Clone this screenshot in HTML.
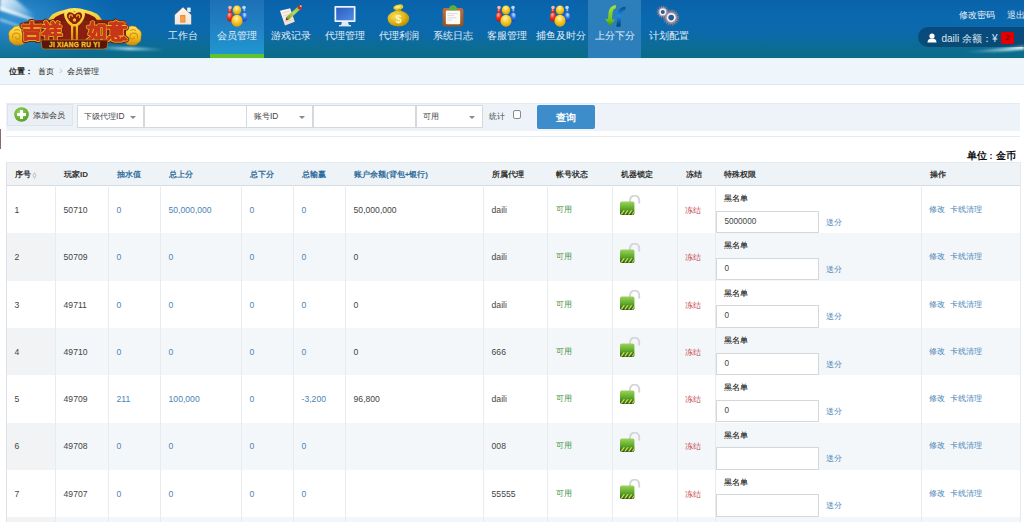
<!DOCTYPE html>
<html><head><meta charset="utf-8">
<style>
*{margin:0;padding:0;box-sizing:border-box}
html,body{width:1024px;height:522px;overflow:hidden;background:#fff;font-family:"Liberation Sans",sans-serif;font-size:8.3px;color:#333;position:relative}
#hd{position:absolute;left:0;top:0;width:1024px;height:57.5px;background:linear-gradient(180deg,#0a63aa 0%,#0a68ae 30%,#0b69ac 55%,#0c6c9a 75%,#0c6b84 100%);overflow:hidden}
#bc{position:absolute;left:0;top:57.5px;width:1024px;height:27px;background:#eef5fb;border-top:1px solid #e6f1f8;border-bottom:1px solid #dfe8ef}
#bc span{position:absolute;top:7px;font-size:8px;color:#222}
.nt{position:absolute;top:30px;width:54px;text-align:center;color:#e3eff9;font-size:9.9px;white-space:nowrap;line-height:12px}
.nav{position:absolute;top:0;height:57.5px;width:54px;color:#e8f2fa;font-size:9.4px}
.nav .t{position:absolute;left:-10px;width:74px;top:30px;text-align:center;white-space:nowrap;line-height:11px}
.nav svg{position:absolute;left:16px;top:4.5px}
#tb{position:absolute;left:6px;top:103px;width:1014px;height:27.5px;background:#edf3f8;border-top:1px solid #e4ebf1}
#tbline{position:absolute;left:6px;top:135.5px;width:1014px;height:1px;background:#e6ebef}
.sel{position:absolute;top:105.2px;height:22.5px;background:#fff;border:1px solid #d4d9de;font-size:8px;color:#444}
.sel .sv{position:absolute;left:6.5px;top:5px;white-space:nowrap;font-size:8.4px}
.sel .ar{position:absolute;right:7px;top:10px;width:0;height:0;border-left:3.5px solid transparent;border-right:3.5px solid transparent;border-top:3.5px solid #888}
#thead{position:absolute;left:6px;top:161.5px;width:1015px;height:24px;background:#eef3f7;border-top:1px solid #e6ebef;border-bottom:1px solid #d4dce3}
#thead .c1{position:absolute;left:0;top:0;width:49.5px;height:100%;background:#f0f2f4}
.hc{position:absolute;top:169px;font-weight:bold;font-size:8px;color:#333;white-space:nowrap;line-height:11px}
.hb{color:#2f6c9c}
.sort{color:#a9b9c9;font-weight:normal;font-size:10px;position:relative;top:0.5px}
.row{position:absolute;left:6px;width:1015px}
.c1bg{position:absolute;left:6px;width:49.5px;background:#f2f3f5}
.vl{position:absolute;top:185px;height:337px;width:1px;background:#e9ecef}
#lb{position:absolute;left:6px;top:161.5px;height:361px;width:1px;background:#dde2e6}
#rb{position:absolute;left:1020px;top:161.5px;height:361px;width:1px;background:#e6eaee}
.cell{position:absolute;white-space:nowrap;line-height:12px;font-size:8.6px}
.t{color:#444}
.v{color:#4a84b5}
.gr{color:#449244;font-size:8px}
.rd{color:#c44448;font-size:8.3px}
.inp{position:absolute;left:716.4px;width:102.4px;height:22.4px;background:#fff;border:1px solid #d3d8dc;font-size:8.2px;color:#444;padding-left:7px;line-height:20.5px}
</style></head><body>
<div id="hd">
<svg style="position:absolute;left:0;top:0" width="1024" height="58" viewBox="0 0 1024 58">
<defs>
<radialGradient id="glowL" cx="0.1" cy="0.3" r="0.9"><stop offset="0" stop-color="#5ab8f0" stop-opacity="0.55"/><stop offset="1" stop-color="#2a90d8" stop-opacity="0"/></radialGradient>
<linearGradient id="beam" x1="0" y1="0" x2="1" y2="0.6"><stop offset="0" stop-color="#fff" stop-opacity="0.95"/><stop offset="0.5" stop-color="#e8f8ff" stop-opacity="0.6"/><stop offset="1" stop-color="#fff" stop-opacity="0"/></linearGradient>
<linearGradient id="streak2" x1="0" y1="0" x2="1" y2="0"><stop offset="0" stop-color="#bff" stop-opacity="0"/><stop offset="0.5" stop-color="#dff" stop-opacity="0.75"/><stop offset="1" stop-color="#bff" stop-opacity="0"/></linearGradient>
<linearGradient id="streak3" x1="0" y1="0" x2="1" y2="0"><stop offset="0" stop-color="#cff" stop-opacity="0"/><stop offset="1" stop-color="#eff" stop-opacity="0.95"/></linearGradient>
<filter id="blur1" x="-20%" y="-50%" width="140%" height="200%"><feGaussianBlur stdDeviation="1.6"/></filter>
<filter id="blur2" x="-20%" y="-50%" width="140%" height="200%"><feGaussianBlur stdDeviation="0.8"/></filter>
</defs>
<rect x="0" y="0" width="120" height="57" fill="url(#glowL)"/>
<path d="M0 -2 L14 -2 L40 20 L34 21 L0 10 Z" fill="url(#beam)" filter="url(#blur1)"/>
<path d="M0 6 L34 19 L33 20.5 L0 10 Z" fill="#fff" opacity="0.75" filter="url(#blur2)"/>
<path d="M0 18 L22 26 L21 27.5 L0 21 Z" fill="#fff" opacity="0.45" filter="url(#blur2)"/>
<path d="M95 46 Q130 47 165 49 L165 50.5 Q130 50.5 95 49 Z" fill="url(#streak2)" filter="url(#blur2)"/>
<path d="M965 51.5 Q1000 49 1024 45 L1024 49.5 Q1000 52.5 965 52.5 Z" fill="url(#streak3)" filter="url(#blur2)"/>
</svg>
<svg style="position:absolute;left:0;top:0" width="150" height="57" viewBox="0 0 150 57">
<defs>
<linearGradient id="gold" x1="0" y1="0" x2="0" y2="1"><stop offset="0" stop-color="#ffe45a"/><stop offset="0.55" stop-color="#f3c020"/><stop offset="1" stop-color="#d08c10"/></linearGradient>
<linearGradient id="redf" x1="0" y1="0" x2="0" y2="1"><stop offset="0" stop-color="#e8502a"/><stop offset="1" stop-color="#c8321a"/></linearGradient>
</defs>
<!-- arch behind -->
<path d="M30 34 Q34 22 48 20 Q52 12 64 10 Q74 6 86 10 Q98 12 102 20 Q116 22 120 34 Z" fill="url(#gold)"/>
<path d="M35 34 Q38 25 51 23 Q55 15 65 13 Q74 10 85 13 Q95 15 99 23 Q112 25 115 34 Z" fill="#7a1a0e"/>
<!-- clouds -->
<g id="cloudL">
<path d="M9 37 Q7.5 31 12 29 Q14 25.5 18.5 26 Q23 26.5 24 30 L25.5 42 Q23 45.5 18 45.2 Q13.5 45.5 11 42.5 Q8.5 40.5 9 37 Z" fill="url(#gold)" stroke="#b87008" stroke-width="0.5"/>
<path d="M12.5 38 Q12 33 16.5 33 Q20.5 33.2 20 37 Q19.5 39.5 17 39 Q15 38.5 16 36.5" fill="none" stroke="#d88a10" stroke-width="1.1"/>
<path d="M14 30.5 Q17 28.5 20 30.5" fill="none" stroke="#d88a10" stroke-width="0.9"/>
</g>
<use href="#cloudL" transform="translate(150 0) scale(-1 1)"/>
<!-- main char band backing -->
<path d="M24 22 Q48 18 64 21 L85 21 Q102 18 126 22 L126 40 L24 40 Z" fill="#8a1e10"/>
<!-- ruyi head -->
<path d="M74.5 12 Q70 8.5 66.5 10 Q63 12 64.5 17 Q66 22 71 26 L71 40 L78 40 L78 26 Q83 22 84.5 17 Q86 12 82.5 10 Q79 8.5 74.5 12 Z" fill="url(#gold)"/>
<path d="M74.5 14.5 Q71 11.5 68.5 12.5 Q66.2 14 67.2 17.5 Q68.5 21 73 24 L76 24 Q80.5 21 81.8 17.5 Q82.8 14 80.5 12.5 Q78 11.5 74.5 14.5 Z" fill="#8a1e10"/>
<path d="M69.5 18 Q68.5 15 71 14.8 Q73 15 72 17" stroke="#f3c020" stroke-width="1.1" fill="none"/>
<path d="M79.5 18 Q80.5 15 78 14.8 Q76 15 77 17" stroke="#f3c020" stroke-width="1.1" fill="none"/>
<circle cx="74.5" cy="20" r="1.7" fill="#f3c020"/>
<rect x="73.2" y="26.5" width="2.6" height="13" fill="#8a1e10"/>
<!-- text -->
<g font-family="Liberation Sans" font-size="19.6" font-weight="bold">
<text x="22" y="37.6" fill="#6a1a0a" stroke="#6a1a0a" stroke-width="4.6" stroke-linejoin="round">吉祥</text>
<text x="86.5" y="37.6" fill="#6a1a0a" stroke="#6a1a0a" stroke-width="4.6" stroke-linejoin="round">如意</text>
<text x="22" y="37.6" fill="#f2c02a" stroke="#f2c02a" stroke-width="2.6" stroke-linejoin="round">吉祥</text>
<text x="86.5" y="37.6" fill="#f2c02a" stroke="#f2c02a" stroke-width="2.6" stroke-linejoin="round">如意</text>
<text x="22" y="37.6" fill="#d23e1c" stroke="#c8361a" stroke-width="1.1">吉祥</text>
<text x="86.5" y="37.6" fill="#d23e1c" stroke="#c8361a" stroke-width="1.1">如意</text>
</g>
<!-- banner -->
<path d="M41 40 L108 40 L107 48 Q104 49.5 100 49 L48 49 Q43 49.5 42 48 Z" fill="#5a1408" stroke="#c89020" stroke-width="0.6"/>
<text x="74.5" y="47.2" text-anchor="middle" font-family="Liberation Sans" font-size="6.5" font-weight="bold" fill="#f0c030" letter-spacing="0.3" stroke="#f0c030" stroke-width="0.3">JI XIANG RU YI</text>
</svg>
<div style="position:absolute;left:210px;top:0;width:54px;height:57.5px;background:linear-gradient(180deg,#1d70b6 0%,#2283c4 50%,#1e9ad2 100%)"></div>
<div style="position:absolute;left:210px;top:53.5px;width:54px;height:4px;background:#62c22c"></div>
<div style="position:absolute;left:588px;top:0;width:53px;height:57.5px;background:#2d7fbc"></div>
<!-- house -->
<svg style="position:absolute;left:174px;top:6px" width="18" height="20" viewBox="0 0 18 20">
<defs><linearGradient id="hs" x1="0" y1="0" x2="0" y2="1"><stop offset="0" stop-color="#fff6ee"/><stop offset="1" stop-color="#f4e4d8"/></linearGradient></defs>
<rect x="13.2" y="1.6" width="3.4" height="4.5" fill="#eef6ff"/>
<path d="M0.8 8.8 L9 1.2 L17.2 8.8 L17.2 18.6 L0.8 18.6 Z" fill="url(#hs)"/>
<path d="M0.6 9 L9 1.2 L17.4 9" fill="none" stroke="#a8705a" stroke-width="0.7" opacity="0.7"/>
<rect x="6.2" y="9" width="5.2" height="7.6" fill="#e98a2c"/>
<rect x="7" y="9.8" width="3.6" height="6" fill="#f4a24a"/>
</svg>
<!-- members -->
<svg style="position:absolute;left:225.5px;top:5px" width="22" height="22" viewBox="0 0 22 22">
<defs>
<radialGradient id="mr" cx="0.4" cy="0.25" r="0.8"><stop offset="0" stop-color="#ffb0a0"/><stop offset="0.5" stop-color="#e8301e"/><stop offset="1" stop-color="#b01008"/></radialGradient>
<radialGradient id="mb" cx="0.6" cy="0.25" r="0.8"><stop offset="0" stop-color="#c0e8ff"/><stop offset="0.5" stop-color="#2a70e0"/><stop offset="1" stop-color="#0c3ab0"/></radialGradient>
<radialGradient id="my" cx="0.45" cy="0.3" r="0.75"><stop offset="0" stop-color="#fff6b0"/><stop offset="0.5" stop-color="#f6c820"/><stop offset="1" stop-color="#d89808"/></radialGradient>
</defs>
<g id="memg">
<circle cx="4" cy="2.6" r="1.8" fill="#f8b4b0"/><circle cx="4" cy="6" r="1.9" fill="url(#mr)"/><ellipse cx="4" cy="12" rx="3.2" ry="4.6" fill="url(#mr)"/>
<circle cx="18" cy="2.6" r="1.8" fill="#b8dcff"/><circle cx="18" cy="6" r="1.9" fill="url(#mb)"/><ellipse cx="18" cy="12" rx="3.2" ry="4.6" fill="url(#mb)"/>
<ellipse cx="11" cy="5" rx="4.2" ry="4.6" fill="url(#my)"/><ellipse cx="11" cy="15.8" rx="5.6" ry="6" fill="url(#my)"/>
</g>
</svg>
<!-- notepad -->
<svg style="position:absolute;left:270px;top:0px" width="40" height="30" viewBox="0 0 40 30">
<defs><linearGradient id="pap" x1="0" y1="0" x2="1" y2="1"><stop offset="0" stop-color="#fffaf6"/><stop offset="1" stop-color="#f0d8c8"/></linearGradient>
<linearGradient id="pen" x1="0" y1="1" x2="1" y2="0"><stop offset="0" stop-color="#6a9a20"/><stop offset="0.5" stop-color="#b8d860"/><stop offset="1" stop-color="#90b840"/></linearGradient></defs>
<path d="M10 10.8 L20.2 8.2 L24.8 21.8 L15 25.4 Z" fill="url(#pap)"/>
<path d="M12.5 13 L19 11.2 M13.5 16 L20 14.2 M15 22 L21.5 20" stroke="#e8b8a8" stroke-width="0.6"/>
<path d="M16.2 17.2 L28.6 6 L31.2 8.6 L18.8 19.8 Z" fill="url(#pen)"/>
<path d="M16.2 17.2 L18.8 19.8 L15.6 20.4 Z" fill="#5a4a2a"/>
<circle cx="30" cy="7.2" r="2.3" fill="#c83020"/>
<circle cx="30.8" cy="6.2" r="0.9" fill="#f8c0b0"/>
</svg>
<!-- monitor -->
<svg style="position:absolute;left:333.5px;top:5px" width="22" height="22" viewBox="0 0 22 22">
<defs><linearGradient id="scr" x1="0" y1="0" x2="1" y2="1"><stop offset="0" stop-color="#2b5cc4"/><stop offset="1" stop-color="#4f8ee0"/></linearGradient></defs>
<rect x="0.5" y="1" width="21" height="16" fill="#eef4fb" rx="0.8"/>
<rect x="2.2" y="2.7" width="17.6" height="12.6" fill="url(#scr)"/>
<path d="M8 17 L14 17 L15 20 L7 20 Z" fill="#e0e8f0"/>
<rect x="5" y="20" width="12" height="1.4" fill="#dfe7ef"/>
</svg>
<!-- money bag -->
<svg style="position:absolute;left:380px;top:0px" width="40" height="30" viewBox="0 0 40 30">
<defs><radialGradient id="bag" cx="0.38" cy="0.35" r="0.75"><stop offset="0" stop-color="#f8e060"/><stop offset="0.6" stop-color="#dcb010"/><stop offset="1" stop-color="#a88200"/></radialGradient></defs>
<ellipse cx="18.3" cy="7.2" rx="5" ry="2.6" transform="rotate(-12 18.3 7.2)" fill="#e8c830"/>
<ellipse cx="17.8" cy="7" rx="3" ry="1.2" transform="rotate(-12 17.8 7)" fill="#f8e878"/>
<path d="M15.5 9 Q18 11 21 9 L21.5 11.5 L15 11.5 Z" fill="#c8a010"/>
<ellipse cx="18.4" cy="18.6" rx="10.8" ry="7.9" fill="url(#bag)"/>
<text x="18.6" y="23.2" text-anchor="middle" font-family="Liberation Sans" font-size="11" font-weight="bold" fill="#fff6c0">$</text>
</svg>
<!-- clipboard -->
<svg style="position:absolute;left:441.5px;top:4.5px" width="22" height="22" viewBox="0 0 22 22">
<defs><linearGradient id="brd" x1="0" y1="0" x2="0" y2="1"><stop offset="0" stop-color="#c07040"/><stop offset="1" stop-color="#985020"/></linearGradient></defs>
<rect x="0.6" y="3" width="20.8" height="18.6" rx="2.4" fill="url(#brd)"/>
<rect x="3.8" y="5.6" width="14.4" height="13.6" rx="1.2" fill="#fdfaf6"/>
<path d="M5.5 8.6 H15.5 M5.5 10.6 H12 M5.5 12.8 H14.5 M5.5 15 H10" stroke="#c8d0da" stroke-width="0.7"/>
<path d="M6.6 5.2 Q7 0.2 11 0.2 Q15 0.2 15.4 5.2 Z" fill="#5cb040"/>
</svg>
<!-- members 2 -->
<svg style="position:absolute;left:495px;top:5px" width="22" height="22" viewBox="0 0 22 22"><use href="#memg"/></svg>
<svg style="position:absolute;left:549px;top:5px" width="22" height="22" viewBox="0 0 22 22"><use href="#memg"/></svg>
<!-- arrows -->
<svg style="position:absolute;left:600px;top:0px" width="30" height="30" viewBox="0 0 30 30">
<defs>
<linearGradient id="ag" x1="0" y1="0" x2="0" y2="1"><stop offset="0" stop-color="#a8e838"/><stop offset="0.7" stop-color="#6cc020"/><stop offset="1" stop-color="#3a8a18"/></linearGradient>
<linearGradient id="ab" x1="0" y1="0" x2="0" y2="1"><stop offset="0" stop-color="#0a4a90"/><stop offset="0.45" stop-color="#1a90e0"/><stop offset="1" stop-color="#083868"/></linearGradient>
</defs>
<path d="M15.8 5 Q10 5.5 8.6 12 L8 19 L5 19 L10.2 26.6 L14.8 19.5 L12 19.5 L12.4 13 Q13 8.5 15.8 8.2 Z" fill="url(#ag)"/>
<path d="M25.5 6.8 Q19 6.6 17.6 13.5 L16.4 26.8 L20.5 26.4 L21.4 15 Q22 10.5 25.5 10 Z" fill="url(#ab)"/>
</svg>
<!-- gears -->
<svg style="position:absolute;left:650px;top:0px" width="34" height="30" viewBox="0 0 34 30">
<g fill="none" stroke="#8a7c8a" stroke-width="2" stroke-dasharray="1.2 1">
<circle cx="12.8" cy="11.9" r="5.2"/>
<circle cx="21.2" cy="17.6" r="7"/>
</g>
<circle cx="12.8" cy="11.9" r="4.6" fill="#a89aa8"/>
<circle cx="21.2" cy="17.6" r="6.3" fill="#9a8c9a"/>
<circle cx="12.8" cy="11.9" r="3.4" fill="#f0f2f6"/><circle cx="12.8" cy="11.9" r="2" fill="#2a5a98"/>
<circle cx="21.2" cy="17.6" r="4.6" fill="#f0f2f6"/><circle cx="21.2" cy="17.6" r="2.8" fill="#2a5a98"/>
</svg>
<div class="nt" style="left:156px">工作台</div>
<div class="nt" style="left:210px">会员管理</div>
<div class="nt" style="left:264px">游戏记录</div>
<div class="nt" style="left:318px">代理管理</div>
<div class="nt" style="left:372px">代理利润</div>
<div class="nt" style="left:426px">系统日志</div>
<div class="nt" style="left:480px">客服管理</div>
<div class="nt" style="left:534px">捕鱼及时分</div>
<div class="nt" style="left:588px">上分下分</div>
<div class="nt" style="left:642px">计划配置</div>
<div style="position:absolute;left:959px;top:9.8px;font-size:8.5px;color:#eaf3fa;white-space:nowrap">修改密码</div>
<div style="position:absolute;left:1006.5px;top:9.8px;font-size:8.5px;color:#eaf3fa;white-space:nowrap">退出</div>
<div style="position:absolute;left:918px;top:26.7px;width:120px;height:20.2px;border-radius:10px;background:rgba(8,50,90,0.55)"></div>
<svg style="position:absolute;left:927px;top:33px" width="10" height="10" viewBox="0 0 10 10"><circle cx="5" cy="3" r="2.6" fill="#fff"/><path d="M0.5 9.5 Q0.5 5.6 5 5.6 Q9.5 5.6 9.5 9.5 Z" fill="#fff"/></svg>
<div style="position:absolute;left:941.5px;top:31.5px;font-size:10px;color:#dde9f3;white-space:nowrap">daili 余额：¥</div>
<div style="position:absolute;left:1001.3px;top:32.2px;width:13px;height:12px;background:#e00000;border-radius:1px;font-size:7px;color:#600;text-align:center;line-height:12px">2</div>

</div>
<div id="bc">
<span style="left:8.8px;font-weight:bold">位置：</span>
<span style="left:38px">首页</span>
<span style="left:59px;top:5px;font-size:11px;color:#c3c9ce">›</span>
<span style="left:66.8px">会员管理</span>
</div>
<div id="tb"></div>
<div style="position:absolute;left:0;top:129px;width:1px;height:20px;background:#8c6870"></div>
<div style="position:absolute;left:6.5px;top:103.6px;width:66px;height:22px;background:#e9eff4;border:1px solid #dde4ea"></div>
<svg style="position:absolute;left:14.3px;top:107.3px" width="15" height="15" viewBox="0 0 15 15"><defs><radialGradient id="gp" cx="0.4" cy="0.35" r="0.7"><stop offset="0" stop-color="#9ad75a"/><stop offset="1" stop-color="#4f9e1e"/></radialGradient></defs><circle cx="7.5" cy="7.5" r="7.3" fill="url(#gp)"/><rect x="6" y="3" width="3" height="9" fill="#fff"/><rect x="3" y="6" width="9" height="3" fill="#fff"/></svg>
<div style="position:absolute;left:32.8px;top:110px;font-size:8px;color:#333;white-space:nowrap">添加会员</div>
<div class="sel" style="left:76.6px;width:67px"><span class="sv">下级代理ID</span><span class="ar"></span></div>
<div class="sel" style="left:143.5px;width:103px"></div>
<div class="sel" style="left:246.4px;width:67px"><span class="sv">账号ID</span><span class="ar"></span></div>
<div class="sel" style="left:313.3px;width:102.3px"></div>
<div class="sel" style="left:415.6px;width:67px"><span class="sv">可用</span><span class="ar"></span></div>
<div style="position:absolute;left:489.3px;top:110.6px;font-size:8px;color:#444">统计</div>
<div style="position:absolute;left:512.5px;top:110.3px;width:8.3px;height:8.3px;border:1px solid #8a8a8a;border-radius:2px;background:#fff"></div>
<div style="position:absolute;left:537.4px;top:104.8px;width:57.2px;height:24.3px;background:#3d8dcb;border-radius:2px;color:#fff;font-weight:bold;font-size:9.5px;text-align:center;line-height:25px">查询</div>
<div id="tbline"></div>
<div style="position:absolute;left:967px;top:149px;font-size:10.2px;font-weight:bold;color:#111;white-space:nowrap">单位</div><div style="position:absolute;left:989.6px;top:150.6px;font-size:9px;font-weight:bold;color:#111">:</div><div style="position:absolute;left:995.6px;top:149px;font-size:10.2px;font-weight:bold;color:#111;white-space:nowrap">金币</div>
<div id="thead"><div class="c1"></div></div>
<div class="hc " style="left:15.0px">序号<svg style='position:absolute;left:17px;top:3px' width='5' height='7' viewBox='0 0 5 7'><path d='M2.5 0 L4.6 3.5 L2.5 7 L0.4 3.5Z' fill='#b4c2d0'/><path d='M2.5 1.6 L3.5 3.5 L2.5 5.4 L1.5 3.5Z' fill='#eef2f6'/></svg></div>
<div class="hc " style="left:64.0px">玩家ID</div>
<div class="hc hb" style="left:117.0px">抽水值</div>
<div class="hc hb" style="left:169.0px">总上分</div>
<div class="hc hb" style="left:250.0px">总下分</div>
<div class="hc hb" style="left:302.0px">总输赢</div>
<div class="hc hb" style="left:354.0px">账户余额(背包+银行)</div>
<div class="hc " style="left:492.0px">所属代理</div>
<div class="hc " style="left:556.0px">帐号状态</div>
<div class="hc " style="left:621.0px">机器锁定</div>
<div class="hc " style="left:686.0px">冻结</div>
<div class="hc " style="left:724.0px">特殊权限</div>
<div class="hc " style="left:930.0px">操作</div>
<div class="row" style="top:186.20px;height:47.76px;background:#fff"></div>
<div class="row" style="top:233.46px;height:47.76px;background:#f4f7fa"></div>
<div class="c1bg" style="top:233.46px;height:47.76px"></div>
<div class="row" style="top:280.72px;height:47.76px;background:#fff"></div>
<div class="row" style="top:327.98px;height:47.76px;background:#f4f7fa"></div>
<div class="c1bg" style="top:327.98px;height:47.76px"></div>
<div class="row" style="top:375.24px;height:47.76px;background:#fff"></div>
<div class="row" style="top:422.50px;height:47.76px;background:#f4f7fa"></div>
<div class="c1bg" style="top:422.50px;height:47.76px"></div>
<div class="row" style="top:469.76px;height:47.76px;background:#fff"></div>
<div class="row" style="top:517.02px;height:10px;background:#f4f7fa"></div><div class="c1bg" style="top:517.02px;height:10px"></div>
<div class="cell t" style="left:14.6px;top:204.13px">1</div>
<div class="cell t" style="left:63.6px;top:204.13px">50710</div>
<div class="cell v" style="left:116.6px;top:204.13px">0</div>
<div class="cell v" style="left:168.6px;top:204.13px">50,000,000</div>
<div class="cell v" style="left:249.6px;top:204.13px">0</div>
<div class="cell v" style="left:301.6px;top:204.13px">0</div>
<div class="cell t" style="left:353.6px;top:204.13px">50,000,000</div>
<div class="cell t" style="left:491.6px;top:204.13px">daili</div>
<div class="cell gr" style="left:555.6px;top:204.13px">可用</div>
<svg width="24" height="22" viewBox="0 0 24 22" style="position:absolute;left:619.0px;top:195.33px"><defs><linearGradient id="lg0" x1="0" y1="0" x2="0" y2="1"><stop offset="0" stop-color="#9ed25a"/><stop offset="0.55" stop-color="#5aa828"/><stop offset="1" stop-color="#2a5a08"/></linearGradient></defs>
<path d="M11 7.5 V5.2 a4.6 4.6 0 0 1 9.2 0 V7.8" fill="none" stroke="#d4d6dc" stroke-width="2" stroke-linecap="round"/>
<rect x="1" y="6.6" width="14.4" height="13.3" rx="1.6" fill="url(#lg0)"/>
<path d="M1.5 19.5 L4.5 15.3 L6 15.3 L3 19.5Z M5.2 19.5 L8.2 15.3 L9.7 15.3 L6.7 19.5Z M8.9 19.5 L11.9 15.3 L13.4 15.3 L10.4 19.5Z M12.6 19.5 L15 16.2 L15 17.6 L14.1 19.5Z" fill="#d8dc6a"/>
</svg>
<div class="cell rd" style="left:685.0px;top:204.13px">冻结</div>
<div class="cell t" style="left:724.2px;top:192.23px;font-size:8.3px;color:#222;font-weight:normal;text-shadow:0.3px 0 0 rgba(0,0,0,0.5)">黑名单</div>
<div class="inp" style="top:210.83px">5000000</div>
<div class="cell v" style="left:826px;top:216.83px;font-size:8.1px">送分</div>
<div class="cell v" style="left:929.4px;top:204.13px;font-size:8.1px">修改<span style="margin-left:5px">卡线清理</span></div>
<div class="cell t" style="left:14.6px;top:251.39px">2</div>
<div class="cell t" style="left:63.6px;top:251.39px">50709</div>
<div class="cell v" style="left:116.6px;top:251.39px">0</div>
<div class="cell v" style="left:168.6px;top:251.39px">0</div>
<div class="cell v" style="left:249.6px;top:251.39px">0</div>
<div class="cell v" style="left:301.6px;top:251.39px">0</div>
<div class="cell t" style="left:353.6px;top:251.39px">0</div>
<div class="cell t" style="left:491.6px;top:251.39px">daili</div>
<div class="cell gr" style="left:555.6px;top:251.39px">可用</div>
<svg width="24" height="22" viewBox="0 0 24 22" style="position:absolute;left:619.0px;top:242.59px"><defs><linearGradient id="lg1" x1="0" y1="0" x2="0" y2="1"><stop offset="0" stop-color="#9ed25a"/><stop offset="0.55" stop-color="#5aa828"/><stop offset="1" stop-color="#2a5a08"/></linearGradient></defs>
<path d="M11 7.5 V5.2 a4.6 4.6 0 0 1 9.2 0 V7.8" fill="none" stroke="#d4d6dc" stroke-width="2" stroke-linecap="round"/>
<rect x="1" y="6.6" width="14.4" height="13.3" rx="1.6" fill="url(#lg1)"/>
<path d="M1.5 19.5 L4.5 15.3 L6 15.3 L3 19.5Z M5.2 19.5 L8.2 15.3 L9.7 15.3 L6.7 19.5Z M8.9 19.5 L11.9 15.3 L13.4 15.3 L10.4 19.5Z M12.6 19.5 L15 16.2 L15 17.6 L14.1 19.5Z" fill="#d8dc6a"/>
</svg>
<div class="cell rd" style="left:685.0px;top:251.39px">冻结</div>
<div class="cell t" style="left:724.2px;top:239.49px;font-size:8.3px;color:#222;font-weight:normal;text-shadow:0.3px 0 0 rgba(0,0,0,0.5)">黑名单</div>
<div class="inp" style="top:258.09px">0</div>
<div class="cell v" style="left:826px;top:264.09px;font-size:8.1px">送分</div>
<div class="cell v" style="left:929.4px;top:251.39px;font-size:8.1px">修改<span style="margin-left:5px">卡线清理</span></div>
<div class="cell t" style="left:14.6px;top:298.65px">3</div>
<div class="cell t" style="left:63.6px;top:298.65px">49711</div>
<div class="cell v" style="left:116.6px;top:298.65px">0</div>
<div class="cell v" style="left:168.6px;top:298.65px">0</div>
<div class="cell v" style="left:249.6px;top:298.65px">0</div>
<div class="cell v" style="left:301.6px;top:298.65px">0</div>
<div class="cell t" style="left:353.6px;top:298.65px">0</div>
<div class="cell t" style="left:491.6px;top:298.65px">daili</div>
<div class="cell gr" style="left:555.6px;top:298.65px">可用</div>
<svg width="24" height="22" viewBox="0 0 24 22" style="position:absolute;left:619.0px;top:289.85px"><defs><linearGradient id="lg2" x1="0" y1="0" x2="0" y2="1"><stop offset="0" stop-color="#9ed25a"/><stop offset="0.55" stop-color="#5aa828"/><stop offset="1" stop-color="#2a5a08"/></linearGradient></defs>
<path d="M11 7.5 V5.2 a4.6 4.6 0 0 1 9.2 0 V7.8" fill="none" stroke="#d4d6dc" stroke-width="2" stroke-linecap="round"/>
<rect x="1" y="6.6" width="14.4" height="13.3" rx="1.6" fill="url(#lg2)"/>
<path d="M1.5 19.5 L4.5 15.3 L6 15.3 L3 19.5Z M5.2 19.5 L8.2 15.3 L9.7 15.3 L6.7 19.5Z M8.9 19.5 L11.9 15.3 L13.4 15.3 L10.4 19.5Z M12.6 19.5 L15 16.2 L15 17.6 L14.1 19.5Z" fill="#d8dc6a"/>
</svg>
<div class="cell rd" style="left:685.0px;top:298.65px">冻结</div>
<div class="cell t" style="left:724.2px;top:286.75px;font-size:8.3px;color:#222;font-weight:normal;text-shadow:0.3px 0 0 rgba(0,0,0,0.5)">黑名单</div>
<div class="inp" style="top:305.35px">0</div>
<div class="cell v" style="left:826px;top:311.35px;font-size:8.1px">送分</div>
<div class="cell v" style="left:929.4px;top:298.65px;font-size:8.1px">修改<span style="margin-left:5px">卡线清理</span></div>
<div class="cell t" style="left:14.6px;top:345.91px">4</div>
<div class="cell t" style="left:63.6px;top:345.91px">49710</div>
<div class="cell v" style="left:116.6px;top:345.91px">0</div>
<div class="cell v" style="left:168.6px;top:345.91px">0</div>
<div class="cell v" style="left:249.6px;top:345.91px">0</div>
<div class="cell v" style="left:301.6px;top:345.91px">0</div>
<div class="cell t" style="left:353.6px;top:345.91px">0</div>
<div class="cell t" style="left:491.6px;top:345.91px">666</div>
<div class="cell gr" style="left:555.6px;top:345.91px">可用</div>
<svg width="24" height="22" viewBox="0 0 24 22" style="position:absolute;left:619.0px;top:337.11px"><defs><linearGradient id="lg3" x1="0" y1="0" x2="0" y2="1"><stop offset="0" stop-color="#9ed25a"/><stop offset="0.55" stop-color="#5aa828"/><stop offset="1" stop-color="#2a5a08"/></linearGradient></defs>
<path d="M11 7.5 V5.2 a4.6 4.6 0 0 1 9.2 0 V7.8" fill="none" stroke="#d4d6dc" stroke-width="2" stroke-linecap="round"/>
<rect x="1" y="6.6" width="14.4" height="13.3" rx="1.6" fill="url(#lg3)"/>
<path d="M1.5 19.5 L4.5 15.3 L6 15.3 L3 19.5Z M5.2 19.5 L8.2 15.3 L9.7 15.3 L6.7 19.5Z M8.9 19.5 L11.9 15.3 L13.4 15.3 L10.4 19.5Z M12.6 19.5 L15 16.2 L15 17.6 L14.1 19.5Z" fill="#d8dc6a"/>
</svg>
<div class="cell rd" style="left:685.0px;top:345.91px">冻结</div>
<div class="cell t" style="left:724.2px;top:334.01px;font-size:8.3px;color:#222;font-weight:normal;text-shadow:0.3px 0 0 rgba(0,0,0,0.5)">黑名单</div>
<div class="inp" style="top:352.61px">0</div>
<div class="cell v" style="left:826px;top:358.61px;font-size:8.1px">送分</div>
<div class="cell v" style="left:929.4px;top:345.91px;font-size:8.1px">修改<span style="margin-left:5px">卡线清理</span></div>
<div class="cell t" style="left:14.6px;top:393.17px">5</div>
<div class="cell t" style="left:63.6px;top:393.17px">49709</div>
<div class="cell v" style="left:116.6px;top:393.17px">211</div>
<div class="cell v" style="left:168.6px;top:393.17px">100,000</div>
<div class="cell v" style="left:249.6px;top:393.17px">0</div>
<div class="cell v" style="left:301.6px;top:393.17px">-3,200</div>
<div class="cell t" style="left:353.6px;top:393.17px">96,800</div>
<div class="cell t" style="left:491.6px;top:393.17px">daili</div>
<div class="cell gr" style="left:555.6px;top:393.17px">可用</div>
<svg width="24" height="22" viewBox="0 0 24 22" style="position:absolute;left:619.0px;top:384.37px"><defs><linearGradient id="lg4" x1="0" y1="0" x2="0" y2="1"><stop offset="0" stop-color="#9ed25a"/><stop offset="0.55" stop-color="#5aa828"/><stop offset="1" stop-color="#2a5a08"/></linearGradient></defs>
<path d="M11 7.5 V5.2 a4.6 4.6 0 0 1 9.2 0 V7.8" fill="none" stroke="#d4d6dc" stroke-width="2" stroke-linecap="round"/>
<rect x="1" y="6.6" width="14.4" height="13.3" rx="1.6" fill="url(#lg4)"/>
<path d="M1.5 19.5 L4.5 15.3 L6 15.3 L3 19.5Z M5.2 19.5 L8.2 15.3 L9.7 15.3 L6.7 19.5Z M8.9 19.5 L11.9 15.3 L13.4 15.3 L10.4 19.5Z M12.6 19.5 L15 16.2 L15 17.6 L14.1 19.5Z" fill="#d8dc6a"/>
</svg>
<div class="cell rd" style="left:685.0px;top:393.17px">冻结</div>
<div class="cell t" style="left:724.2px;top:381.27px;font-size:8.3px;color:#222;font-weight:normal;text-shadow:0.3px 0 0 rgba(0,0,0,0.5)">黑名单</div>
<div class="inp" style="top:399.87px">0</div>
<div class="cell v" style="left:826px;top:405.87px;font-size:8.1px">送分</div>
<div class="cell v" style="left:929.4px;top:393.17px;font-size:8.1px">修改<span style="margin-left:5px">卡线清理</span></div>
<div class="cell t" style="left:14.6px;top:440.43px">6</div>
<div class="cell t" style="left:63.6px;top:440.43px">49708</div>
<div class="cell v" style="left:116.6px;top:440.43px">0</div>
<div class="cell v" style="left:168.6px;top:440.43px">0</div>
<div class="cell v" style="left:249.6px;top:440.43px">0</div>
<div class="cell v" style="left:301.6px;top:440.43px">0</div>
<div class="cell t" style="left:353.6px;top:440.43px"></div>
<div class="cell t" style="left:491.6px;top:440.43px">008</div>
<div class="cell gr" style="left:555.6px;top:440.43px">可用</div>
<svg width="24" height="22" viewBox="0 0 24 22" style="position:absolute;left:619.0px;top:431.63px"><defs><linearGradient id="lg5" x1="0" y1="0" x2="0" y2="1"><stop offset="0" stop-color="#9ed25a"/><stop offset="0.55" stop-color="#5aa828"/><stop offset="1" stop-color="#2a5a08"/></linearGradient></defs>
<path d="M11 7.5 V5.2 a4.6 4.6 0 0 1 9.2 0 V7.8" fill="none" stroke="#d4d6dc" stroke-width="2" stroke-linecap="round"/>
<rect x="1" y="6.6" width="14.4" height="13.3" rx="1.6" fill="url(#lg5)"/>
<path d="M1.5 19.5 L4.5 15.3 L6 15.3 L3 19.5Z M5.2 19.5 L8.2 15.3 L9.7 15.3 L6.7 19.5Z M8.9 19.5 L11.9 15.3 L13.4 15.3 L10.4 19.5Z M12.6 19.5 L15 16.2 L15 17.6 L14.1 19.5Z" fill="#d8dc6a"/>
</svg>
<div class="cell rd" style="left:685.0px;top:440.43px">冻结</div>
<div class="cell t" style="left:724.2px;top:428.53px;font-size:8.3px;color:#222;font-weight:normal;text-shadow:0.3px 0 0 rgba(0,0,0,0.5)">黑名单</div>
<div class="inp" style="top:447.13px"></div>
<div class="cell v" style="left:826px;top:453.13px;font-size:8.1px">送分</div>
<div class="cell v" style="left:929.4px;top:440.43px;font-size:8.1px">修改<span style="margin-left:5px">卡线清理</span></div>
<div class="cell t" style="left:14.6px;top:487.69px">7</div>
<div class="cell t" style="left:63.6px;top:487.69px">49707</div>
<div class="cell v" style="left:116.6px;top:487.69px">0</div>
<div class="cell v" style="left:168.6px;top:487.69px">0</div>
<div class="cell v" style="left:249.6px;top:487.69px">0</div>
<div class="cell v" style="left:301.6px;top:487.69px">0</div>
<div class="cell t" style="left:353.6px;top:487.69px"></div>
<div class="cell t" style="left:491.6px;top:487.69px">55555</div>
<div class="cell gr" style="left:555.6px;top:487.69px">可用</div>
<svg width="24" height="22" viewBox="0 0 24 22" style="position:absolute;left:619.0px;top:478.89px"><defs><linearGradient id="lg6" x1="0" y1="0" x2="0" y2="1"><stop offset="0" stop-color="#9ed25a"/><stop offset="0.55" stop-color="#5aa828"/><stop offset="1" stop-color="#2a5a08"/></linearGradient></defs>
<path d="M11 7.5 V5.2 a4.6 4.6 0 0 1 9.2 0 V7.8" fill="none" stroke="#d4d6dc" stroke-width="2" stroke-linecap="round"/>
<rect x="1" y="6.6" width="14.4" height="13.3" rx="1.6" fill="url(#lg6)"/>
<path d="M1.5 19.5 L4.5 15.3 L6 15.3 L3 19.5Z M5.2 19.5 L8.2 15.3 L9.7 15.3 L6.7 19.5Z M8.9 19.5 L11.9 15.3 L13.4 15.3 L10.4 19.5Z M12.6 19.5 L15 16.2 L15 17.6 L14.1 19.5Z" fill="#d8dc6a"/>
</svg>
<div class="cell rd" style="left:685.0px;top:487.69px">冻结</div>
<div class="cell t" style="left:724.2px;top:475.79px;font-size:8.3px;color:#222;font-weight:normal;text-shadow:0.3px 0 0 rgba(0,0,0,0.5)">黑名单</div>
<div class="inp" style="top:494.39px"></div>
<div class="cell v" style="left:826px;top:500.39px;font-size:8.1px">送分</div>
<div class="cell v" style="left:929.4px;top:487.69px;font-size:8.1px">修改<span style="margin-left:5px">卡线清理</span></div>
<div class="vl" style="left:55.0px"></div>
<div class="vl" style="left:108.0px"></div>
<div class="vl" style="left:160.0px"></div>
<div class="vl" style="left:241.0px"></div>
<div class="vl" style="left:293.0px"></div>
<div class="vl" style="left:345.0px"></div>
<div class="vl" style="left:483.0px"></div>
<div class="vl" style="left:547.0px"></div>
<div class="vl" style="left:612.0px"></div>
<div class="vl" style="left:677.0px"></div>
<div class="vl" style="left:715.0px"></div>
<div class="vl" style="left:921.0px"></div>
<div id="lb"></div><div id="rb"></div>
</body></html>
